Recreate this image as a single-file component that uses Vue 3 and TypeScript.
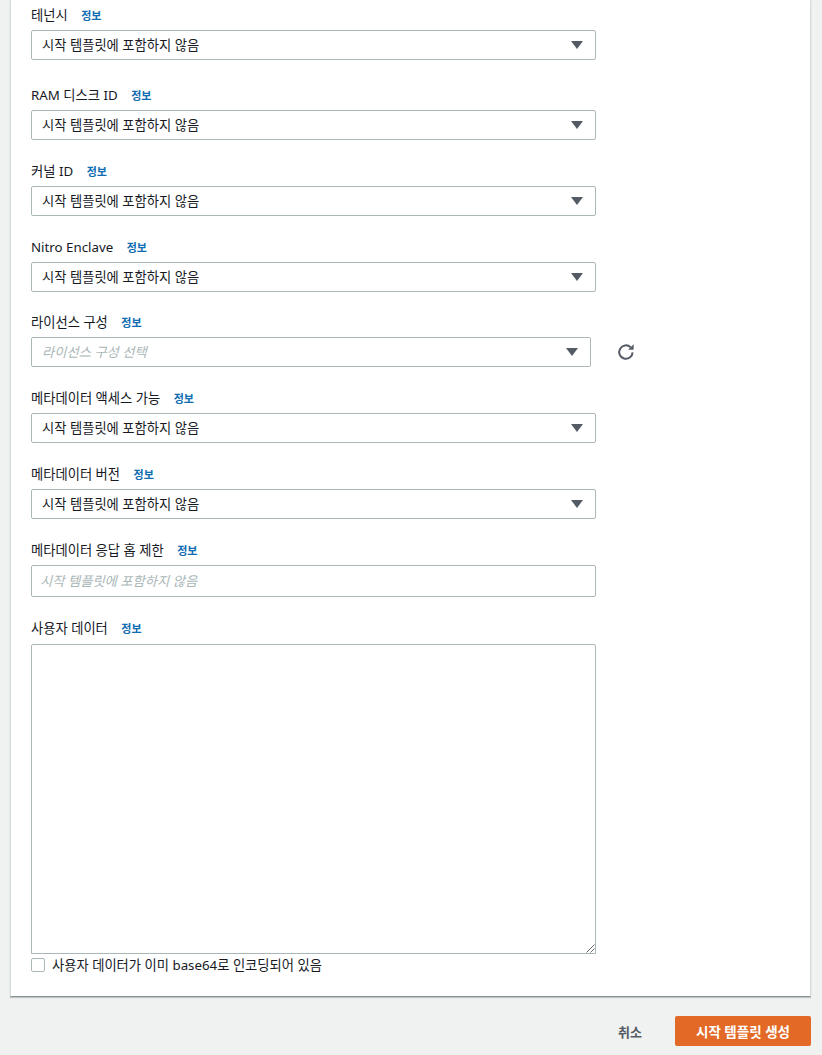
<script setup lang="ts">
interface Field {
  label: string
  kind: 'select' | 'license' | 'input' | 'textarea'
  cls?: string
}
const fields: Field[] = [
  { label: '테넌시', kind: 'select', cls: 'first' },
  { label: 'RAM 디스크 ID', kind: 'select', cls: 'after-first' },
  { label: '커널 ID', kind: 'select' },
  { label: 'Nitro Enclave', kind: 'select' },
  { label: '라이선스 구성', kind: 'license', cls: 'tight' },
  { label: '메타데이터 액세스 가능', kind: 'select' },
  { label: '메타데이터 버전', kind: 'select' },
  { label: '메타데이터 응답 홉 제한', kind: 'input' },
  { label: '사용자 데이터', kind: 'textarea', cls: 'text-field' },
]
const notIncluded = '시작 템플릿에 포함하지 않음'
</script>

<template>
  <div class="page">
    <section class="panel">
      <div v-for="f in fields" :key="f.label" class="field" :class="f.cls">
        <div class="label-row">
          <span class="label">{{ f.label }}</span>
          <a class="info">정보</a>
        </div>

        <div v-if="f.kind === 'select'" class="select">
          <span class="value">{{ notIncluded }}</span>
          <i class="caret"></i>
        </div>

        <div v-else-if="f.kind === 'license'" class="license-row">
          <div class="select narrow">
            <span class="value placeholder">라이선스 구성 선택</span>
            <i class="caret"></i>
          </div>
          <svg class="refresh" width="18" height="18" viewBox="0 0 18 18" fill="none">
            <path d="M15.6 9.4a6.7 6.7 0 1 1-2-5.1" stroke="#545b64" stroke-width="2" />
            <path d="M16.6 1.3v5.5h-5.5z" fill="#545b64" />
          </svg>
        </div>

        <div v-else-if="f.kind === 'input'" class="text-input">
          <span class="value placeholder">{{ notIncluded }}</span>
        </div>

        <template v-else>
          <div class="textarea">
            <svg class="grip" width="9" height="9" viewBox="0 0 9 9" fill="none">
              <path d="M0.5 8.5 8.5 0.5M4.5 8.5 8.5 4.5" stroke="#6b6f73" stroke-width="1" />
            </svg>
          </div>
          <label class="check-row">
            <span class="checkbox"></span>
            <span class="value">사용자 데이터가 이미 base64로 인코딩되어 있음</span>
          </label>
        </template>
      </div>
    </section>

    <footer class="actions">
      <a class="cancel">취소</a>
      <button class="primary" type="button">시작 템플릿 생성</button>
    </footer>
  </div>
</template>

<style scoped>
.page {
  width: 822px;
  height: 1055px;
  overflow: hidden;
  box-sizing: border-box;
  background: #f0f1f1;
  font-family: "Noto Sans", "Noto Sans CJK KR", sans-serif;
  font-size: 13.3px;
  color: #16191f;
}
.panel {
  box-sizing: border-box;
  width: 801px;
  height: 997px;
  margin-left: 10px;
  padding: 5px 20px 0;
  background: #fff;
  border: 1px solid #d5dbdb;
  border-top: 0;
  border-bottom: 1px solid #879596;
  box-shadow: 0 1px 1px rgba(0, 28, 36, 0.2);
}
.field {
  margin-bottom: 21px;
}
.field.first {
  margin-bottom: 25px;
}
.field.tight {
  margin-top: -1px;
}
.label-row {
  display: flex;
  align-items: center;
  height: 20px;
  margin-bottom: 5px;
}
.label {
  line-height: 20px;
}
.info {
  margin-left: 13.5px;
  font-size: 11px;
  font-weight: 700;
  color: #0f6cb0;
}
.select,
.text-input {
  box-sizing: border-box;
  width: 565px;
  height: 30px;
  padding: 0 10px;
  display: flex;
  align-items: center;
  justify-content: space-between;
  background: #fff;
  border: 1px solid #aab7b8;
  border-radius: 2px;
  line-height: 20px;
}
.select.narrow {
  width: 560px;
}
.text-input {
  height: 32px;
  padding-left: 8px;
}
.placeholder {
  font-style: italic;
  color: #aab7b8;
}
.caret {
  width: 0;
  height: 0;
  margin-right: 2px;
  border-left: 6px solid transparent;
  border-right: 6px solid transparent;
  border-top: 8px solid #545b64;
}
.license-row {
  display: flex;
  align-items: center;
  gap: 26px;
}
.refresh {
  display: block;
}
.text-field .label-row {
  margin-bottom: 6px;
}
.textarea {
  position: relative;
  box-sizing: border-box;
  width: 565px;
  height: 310px;
  background: #fff;
  border: 1px solid #aab7b8;
  border-radius: 2px 2px 0 0;
}
.grip {
  position: absolute;
  right: 0;
  bottom: 0;
}
.check-row {
  display: flex;
  align-items: center;
  gap: 7px;
  height: 22px;
  line-height: 22px;
}
.checkbox {
  box-sizing: border-box;
  width: 14px;
  height: 14px;
  background: #fff;
  border: 1px solid #aab7b8;
  border-radius: 2px;
}
.actions {
  display: flex;
  justify-content: flex-end;
  align-items: center;
  margin-top: 19px;
  padding-right: 11px;
}
.cancel {
  margin-right: 33px;
  font-weight: 700;
  font-size: 13px;
  color: #545b64;
}
.primary {
  box-sizing: border-box;
  width: 136px;
  height: 30px;
  padding: 0;
  background: #e26a26;
  border: 0;
  border-radius: 2px;
  color: #fff;
  font-family: inherit;
  font-size: 13.5px;
  font-weight: 700;
}
</style>
<style>
html, body { margin: 0; background: #f0f1f1; }
</style>
